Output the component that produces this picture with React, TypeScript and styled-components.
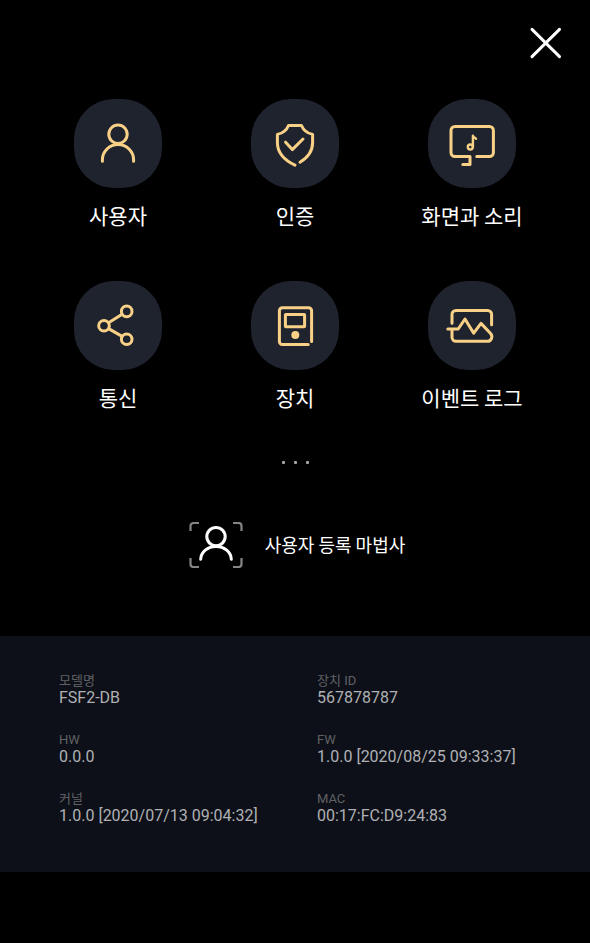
import React from "react";
import styled, { createGlobalStyle } from "styled-components";

const GlobalStyle = createGlobalStyle`
  *, *::before, *::after { box-sizing: border-box; }
  html, body, #root { min-height: 100vh; }
  body {
    margin: 0;
    background: #000;
    color: #fff;
    font-family: Roboto, "Noto Sans CJK KR", sans-serif;
  }
  button {
    font: inherit;
    color: inherit;
    background: none;
    border: 0;
    padding: 0;
    cursor: pointer;
  }
`;

const Screen = styled.main`
  display: flex;
  flex-direction: column;
`;

const Header = styled.header`
  display: flex;
  justify-content: flex-end;
  padding: 25px 26px 38px;
`;

const CloseButton = styled.button`
  display: block;
  width: 36px;
  height: 36px;
`;

const MenuGrid = styled.nav`
  display: grid;
  grid-template-columns: repeat(3, 1fr);
  row-gap: 50px;
  padding: 0 5%;
`;

const MenuButton = styled.button`
  display: flex;
  flex-direction: column;
  align-items: center;
  gap: 12px;
`;

const IconDisc = styled.span`
  display: block;
  width: 88px;
  height: 89px;
  border-radius: 40px;
  background: #1f232e;
`;

const MenuLabel = styled.span`
  font-family: "Noto Sans CJK KR", sans-serif;
  font-size: 21px;
  line-height: 31px;
  white-space: nowrap;
`;

const Glyph = styled.svg`
  display: block;
  fill: none;
  stroke-linecap: round;
  stroke-linejoin: round;
`;

const Pager = styled.div`
  display: flex;
  justify-content: center;
  gap: 9px;
  margin-top: 48px;
`;

const PagerDot = styled.span`
  width: 3px;
  height: 3px;
  border-radius: 1px;
  background: #a6a6a6;
`;

const WizardButton = styled.button`
  display: flex;
  align-items: center;
  align-self: center;
  gap: 22px;
  margin: 58px 0 68px;
  padding-left: 4px;
`;

const WizardLabel = styled.span`
  padding-bottom: 2px;
  font-family: "Noto Sans CJK KR", sans-serif;
  font-size: 18px;
  line-height: 26px;
`;

const InfoPanel = styled.dl`
  display: grid;
  grid-template-columns: repeat(2, 1fr);
  row-gap: 25px;
  margin: 0;
  padding: 37px 15px 47px 59px;
  background: #0d1018;
`;

const InfoItem = styled.div`
  display: flex;
  flex-direction: column;
`;

const InfoName = styled.dt`
  font-size: 13px;
  line-height: 16px;
  color: #606164;
`;

const InfoValue = styled.dd`
  margin: 0;
  font-size: 16px;
  line-height: 18px;
  color: #b0b1b4;
`;

const icons: Record<string, React.ReactNode> = {
  user: (
    <>
      <circle cx="44" cy="35.3" r="9.2" />
      <path d="M28.4 62.3V61a15.6 15.6 0 0 1 31.2 0v1.3" />
    </>
  ),
  auth: (
    <>
      <path d="M44 66.200C33 61 26.400 53.500 26.400 43.500V35.400C31.500 34.300 35.500 31.500 37.500 26.500H50.500C52.500 31.500 56.500 34.300 61.600 35.400V43.500C61.600 52 56.800 58.600 49 63.200" />
      <path d="M34.600 43.200L41.300 50.600L52 40" />
    </>
  ),
  display: (
    <>
      <path d="M48.700 57.600H61.400a4 4 0 0 0 4-4V31.500a4 4 0 0 0-4-4H27a4 4 0 0 0-4 4V53.600a4 4 0 0 0 4 4H42V65.500H34.800" />
      <g strokeWidth="2.400">
        <circle cx="42.300" cy="48" r="2.500" />
        <path d="M44.900 48V36.800C45.400 38.400 46.800 38.200 48 39.800" />
      </g>
    </>
  ),
  network: (
    <>
      <circle cx="30" cy="44.700" r="5.300" />
      <circle cx="52.700" cy="30.400" r="5.300" />
      <circle cx="52.700" cy="58.200" r="5.300" />
      <path d="M34.600 41.800L48.100 33.300M34.600 47.600L48.100 55.400" />
    </>
  ),
  device: (
    <>
      <path d="M57.200 63.600H31.400a3 3 0 0 1-3-3V29.700a3 3 0 0 1 3-3H57.600a3 3 0 0 1 3 3V60.400" />
      <rect x="34.400" y="33.400" width="19.200" height="12.400" rx="0.500" />
      <circle cx="44.300" cy="54" r="4" fill="#f8d187" stroke="none" />
    </>
  ),
  log: (
    <>
      <path d="M24 42.200V33.400a4 4 0 0 1 4-4H59.600a4 4 0 0 1 4 4V43.800" />
      <path d="M19.800 48H30.200L37 38L45.700 52.200L53 42.400L62.600 52.500C65.300 55.600 63.200 60.300 59.600 60.300H28a4 4 0 0 1-4-4V48.600" />
    </>
  ),
};

const menu = [
  { icon: "user", label: "사용자" },
  { icon: "auth", label: "인증" },
  { icon: "display", label: "화면과 소리" },
  { icon: "network", label: "통신" },
  { icon: "device", label: "장치" },
  { icon: "log", label: "이벤트 로그" },
];

const info = [
  { name: "모델명", value: "FSF2-DB" },
  { name: "장치 ID", value: "567878787" },
  { name: "HW", value: "0.0.0" },
  { name: "FW", value: "1.0.0 [2020/08/25 09:33:37]" },
  { name: "커널", value: "1.0.0 [2020/07/13 09:04:32]" },
  { name: "MAC", value: "00:17:FC:D9:24:83" },
];

export default function App() {
  return (
    <>
      <GlobalStyle />
      <Screen>
        <Header>
          <CloseButton type="button" aria-label="닫기">
            <Glyph width="36" height="36" viewBox="0 0 36 36" stroke="#fff" strokeWidth="3" aria-hidden="true">
              <path d="M4 4.400L31.500 31.600M31.500 4.400L4 31.600" />
            </Glyph>
          </CloseButton>
        </Header>
        <MenuGrid>
          {menu.map((item) => (
            <MenuButton type="button" key={item.icon}>
              <IconDisc>
                <Glyph width="88" height="88" viewBox="0 0 88 88" stroke="#f8d187" strokeWidth="3" aria-hidden="true">
                  {icons[item.icon]}
                </Glyph>
              </IconDisc>
              <MenuLabel>{item.label}</MenuLabel>
            </MenuButton>
          ))}
        </MenuGrid>
        <Pager aria-hidden="true">
          <PagerDot />
          <PagerDot />
          <PagerDot />
        </Pager>
        <WizardButton type="button">
          <Glyph width="54" height="46" viewBox="0 0 54 46" aria-hidden="true">
            <path
              stroke="#858585"
              strokeWidth="2.200"
              strokeLinecap="butt"
              d="M1.500 9V4a3 3 0 0 1 3-3H10M44 1h5.500a3 3 0 0 1 3 3V9M52.500 36v6a3 3 0 0 1-3 3H44M10 45H4.500a3 3 0 0 1-3-3V36"
            />
            <g stroke="#fff" strokeWidth="3">
              <circle cx="27" cy="14.600" r="9.200" />
              <path d="M11.700 37.200C12 30 18.500 24.400 27 24.400S42 30 42.300 37.200" />
            </g>
          </Glyph>
          <WizardLabel>사용자 등록 마법사</WizardLabel>
        </WizardButton>
        <InfoPanel>
          {info.map((item) => (
            <InfoItem key={item.name}>
              <InfoName>{item.name}</InfoName>
              <InfoValue>{item.value}</InfoValue>
            </InfoItem>
          ))}
        </InfoPanel>
      </Screen>
    </>
  );
}
